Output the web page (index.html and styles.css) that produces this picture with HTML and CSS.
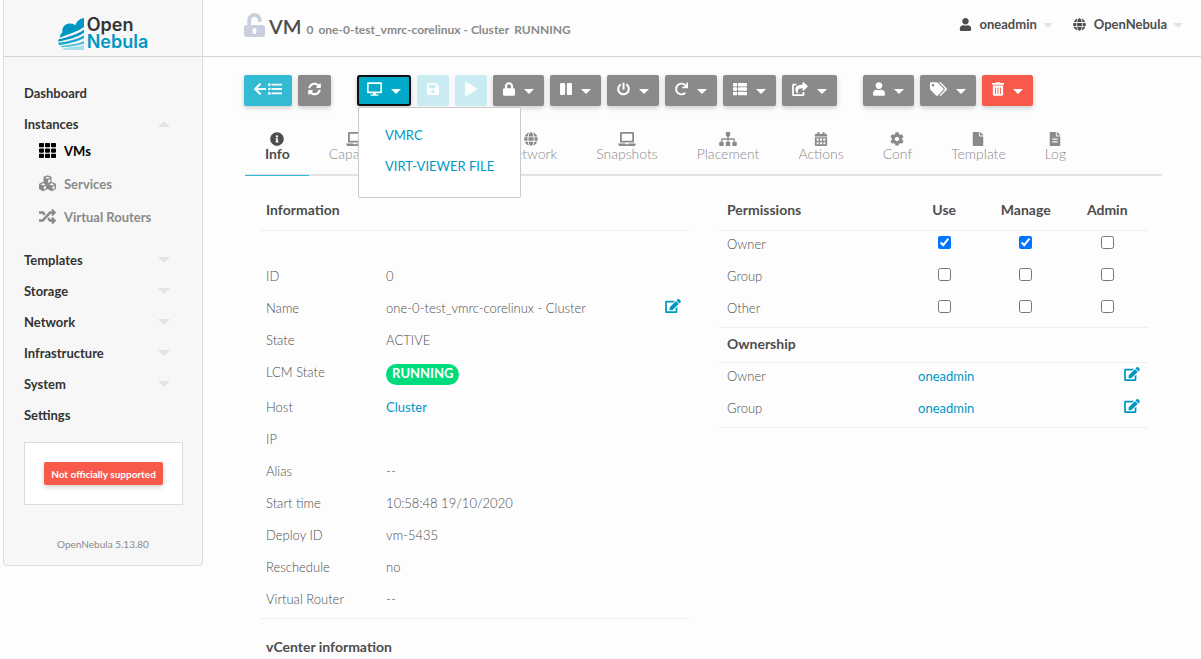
FILE: index.html
```html
<!DOCTYPE html>
<html lang="en">
<head>
<meta charset="utf-8">
<title>OpenNebula Sunstone</title>
<link rel="stylesheet" href="styles.css">
</head>
<body>
<svg class="sprite" aria-hidden="true">
  <symbol id="user" viewBox="0 0 448 512"><path d="M224 256c70.7 0 128-57.3 128-128S294.7 0 224 0 96 57.3 96 128s57.3 128 128 128zm89.6 32h-16.7c-22.2 10.2-46.9 16-72.9 16s-50.6-5.8-72.9-16h-16.7C60.2 288 0 348.2 0 422.4V464c0 26.5 21.5 48 48 48h352c26.5 0 48-21.5 48-48v-41.6c0-74.2-60.2-134.4-134.4-134.4z"/></symbol>
  <symbol id="unlock" viewBox="0 0 448 512"><path d="M400 256H152V152.900c0-39.600 31.700-72.500 71.300-72.900 40-.4 72.700 32.100 72.700 72v16c0 13.300 10.700 24 24 24h32c13.300 0 24-10.700 24-24v-16C376 68 307.500-.3 223.500 0 139.500.3 72 69.500 72 153.500V256H48c-26.500 0-48 21.500-48 48v160c0 26.500 21.500 48 48 48h352c26.500 0 48-21.500 48-48V304c0-26.500-21.500-48-48-48zM264 408c0 22.100-17.900 40-40 40s-40-17.900-40-40v-48c0-22.100 17.900-40 40-40s40 17.900 40 40v48z"/></symbol>
  <symbol id="lock" viewBox="0 0 448 512"><path d="M400 224h-24v-72C376 68.200 307.800 0 224 0S72 68.200 72 152v72H48c-26.500 0-48 21.500-48 48v192c0 26.500 21.500 48 48 48h352c26.500 0 48-21.500 48-48V272c0-26.500-21.500-48-48-48zm-104 0H152v-72c0-39.700 32.300-72 72-72s72 32.300 72 72v72z"/></symbol>
  <symbol id="play" viewBox="0 0 448 512"><path d="M424.400 214.700L72.400 6.600C43.800-10.300 0 6.100 0 47.900V464c0 37.500 40.700 60.100 72.400 41.300l352-208c31.400-18.500 31.500-64.100 0-82.600z"/></symbol>
  <symbol id="pause" viewBox="0 0 448 512"><path d="M144 479H48c-26.500 0-48-21.500-48-48V79c0-26.500 21.500-48 48-48h96c26.500 0 48 21.500 48 48v352c0 26.500-21.500 48-48 48zm304-48V79c0-26.500-21.500-48-48-48h-96c-26.500 0-48 21.500-48 48v352c0 26.500 21.500 48 48 48h96c26.500 0 48-21.500 48-48z"/></symbol>
  <symbol id="power" viewBox="0 0 512 512"><path d="M400 54.100c63 45 104 118.600 104 201.900 0 136.800-110.800 247.700-247.500 248C120 504.300 8.200 393 8 256.400 7.900 173.100 48.900 99.300 111.800 54.200c11.700-8.300 28-4.800 35 7.700L162.600 90c5.900 10.500 3.100 23.800-6.600 31-41.500 30.800-68 79.600-68 134.900-.1 92.300 74.500 168.100 168 168.100 91.600 0 168.600-74.200 168-169.100-.3-51.800-24.700-101.800-68.100-134-9.700-7.200-12.400-20.500-6.500-30.900l15.800-28.100c7-12.400 23.200-16.100 34.800-7.800zM296 264V24c0-13.300-10.700-24-24-24h-32c-13.300 0-24 10.700-24 24v240c0 13.300 10.700 24 24 24h32c13.300 0 24-10.700 24-24z"/></symbol>
  <symbol id="redo" viewBox="0 0 512 512"><path d="M500.330 0h-47.410a12 12 0 0 0-12 12.570l4 82.760A247.420 247.420 0 0 0 256 8C119.340 8 7.900 119.530 8 256.190 8.100 393.070 119.100 504 256 504a247.100 247.100 0 0 0 166.180-63.910 12 12 0 0 0 .48-17.430l-34-34a12 12 0 0 0-16.380-.55A176 176 0 1 1 402.100 157.800l-101.530-4.870a12 12 0 0 0-12.570 12v47.410a12 12 0 0 0 12 12h200.330a12 12 0 0 0 12-12V12a12 12 0 0 0-12-12z"/></symbol>
  <symbol id="sync" viewBox="0 0 512 512"><path d="M370.720 133.280C339.458 104.008 298.888 87.962 255.848 88c-77.458.068-144.328 53.178-162.791 126.850-1.344 5.363-6.122 9.150-11.651 9.150H24.103c-7.498 0-13.194-6.807-11.807-14.176C33.933 94.924 134.813 8 256 8c66.448 0 126.791 26.136 171.315 68.685L463.030 40.970C478.149 25.851 504 36.559 504 57.941V192c0 13.255-10.745 24-24 24H345.941c-21.382 0-32.090-25.851-16.971-40.971l41.750-41.749zM32 296h134.059c21.382 0 32.090 25.851 16.971 40.971l-41.750 41.750c31.262 29.273 71.835 45.319 114.876 45.280 77.418-.07 144.315-53.144 162.787-126.849 1.344-5.363 6.122-9.150 11.651-9.150h57.304c7.498 0 13.194 6.807 11.807 14.176C478.067 417.076 377.187 504 256 504c-66.448 0-126.791-26.136-171.315-68.685L48.970 471.030C33.851 486.149 8 475.441 8 454.059V320c0-13.255 10.745-24 24-24z"/></symbol>
  <symbol id="save" viewBox="0 0 448 512"><path d="M433.941 129.941l-83.882-83.882A48 48 0 0 0 316.118 32H48C21.490 32 0 53.490 0 80v352c0 26.510 21.490 48 48 48h352c26.510 0 48-21.490 48-48V163.882a48 48 0 0 0-14.059-33.941zM224 416c-35.346 0-64-28.654-64-64 0-35.346 28.654-64 64-64s64 28.654 64 64c0 35.346-28.654 64-64 64zm96-304.520V212c0 6.627-5.373 12-12 12H76c-6.627 0-12-5.373-12-12V108c0-6.627 5.373-12 12-12h228.520c3.183 0 6.235 1.264 8.485 3.515l3.480 3.480A11.996 11.996 0 0 1 320 111.480z"/></symbol>
  <symbol id="tags" viewBox="0 0 640 512"><path d="M497.941 225.941L286.059 14.059A48 48 0 0 0 252.118 0H48C21.490 0 0 21.490 0 48v204.118a48 48 0 0 0 14.059 33.941l211.882 211.882c18.744 18.745 49.136 18.746 67.882 0l204.118-204.118c18.745-18.745 18.745-49.137 0-67.882zM112 160c-26.510 0-48-21.490-48-48s21.490-48 48-48 48 21.490 48 48-21.490 48-48 48zm513.941 133.823L421.823 497.941c-18.745 18.745-49.137 18.745-67.882 0l-.36-.36L527.640 323.522c16.999-16.999 26.360-39.600 26.360-63.640s-9.362-46.641-26.360-63.640L331.397 0h48.721a48 48 0 0 1 33.941 14.059l211.882 211.882c18.745 18.745 18.745 49.137 0 67.882z"/></symbol>
  <symbol id="trash" viewBox="0 0 448 512"><path d="M32 464a48 48 0 0 0 48 48h288a48 48 0 0 0 48-48V128H32zm272-256a16 16 0 0 1 32 0v224a16 16 0 0 1-32 0zm-96 0a16 16 0 0 1 32 0v224a16 16 0 0 1-32 0zm-96 0a16 16 0 0 1 32 0v224a16 16 0 0 1-32 0zM432 32H312l-9.400-18.700A24 24 0 0 0 281.100 0H166.800a23.720 23.720 0 0 0-21.400 13.300L136 32H16A16 16 0 0 0 0 48v32a16 16 0 0 0 16 16h416a16 16 0 0 0 16-16V48a16 16 0 0 0-16-16z"/></symbol>
  <symbol id="info" viewBox="0 0 512 512"><path d="M256 8C119.043 8 8 119.083 8 256c0 136.997 111.043 248 248 248s248-111.003 248-248C504 119.083 392.957 8 256 8zm0 110c23.196 0 42 18.804 42 42s-18.804 42-42 42-42-18.804-42-42 18.804-42 42-42zm56 254c0 6.627-5.373 12-12 12h-88c-6.627 0-12-5.373-12-12v-24c0-6.627 5.373-12 12-12h12v-64h-12c-6.627 0-12-5.373-12-12v-24c0-6.627 5.373-12 12-12h64c6.627 0 12 5.373 12 12v100h12c6.627 0 12 5.373 12 12v24z"/></symbol>
  <symbol id="laptop" viewBox="0 0 640 512"><path d="M624 416H381.540c-.74 19.810-14.710 32-32.740 32H288c-18.690 0-33.020-17.470-32.770-32H16c-8.800 0-16 7.200-16 16v16c0 35.200 28.800 64 64 64h512c35.200 0 64-28.800 64-64v-16c0-8.800-7.200-16-16-16zM576 48c0-26.400-21.600-48-48-48H112C85.600 0 64 21.600 64 48v336h512V48zm-64 272H128V64h384v256z"/></symbol>
  <symbol id="file" viewBox="0 0 384 512"><path d="M224 136V0H24C10.700 0 0 10.700 0 24v464c0 13.300 10.700 24 24 24h336c13.300 0 24-10.700 24-24V160H248c-13.200 0-24-10.800-24-24zm160-14.100v6.100H256V0h6.100c6.400 0 12.500 2.500 17 7l97.900 98c4.500 4.500 7 10.600 7 16.900z"/></symbol>
  <symbol id="filetext" viewBox="0 0 384 512"><path fill-rule="evenodd" d="M224 136V0H24C10.700 0 0 10.700 0 24v464c0 13.300 10.700 24 24 24h336c13.300 0 24-10.700 24-24V160H248c-13.200 0-24-10.800-24-24zm160-14.100v6.100H256V0h6.100c6.400 0 12.500 2.500 17 7l97.900 98c4.500 4.500 7 10.600 7 16.900zM96 236h192v44H96zM96 340h192v44H96z"/></symbol>
  <symbol id="cog" viewBox="0 0 512 512"><path d="M487.400 315.700l-42.600-24.600c4.300-23.200 4.300-47 0-70.200l42.600-24.600c4.900-2.800 7.100-8.600 5.500-14-11.100-35.600-30-67.800-54.700-94.600-3.800-4.100-10-5.100-14.800-2.300L380.800 110c-17.900-15.400-38.500-27.300-60.800-35.100V25.800c0-5.600-3.900-10.500-9.400-11.700-36.700-8.200-74.300-7.800-109.200 0-5.500 1.200-9.400 6.100-9.400 11.700V75c-22.200 7.900-42.800 19.800-60.800 35.100L88.700 85.500c-4.900-2.800-11-1.900-14.800 2.300-24.700 26.700-43.600 58.900-54.700 94.600-1.700 5.400.6 11.200 5.500 14L67.300 221c-4.300 23.200-4.300 47 0 70.200l-42.600 24.600c-4.900 2.800-7.100 8.600-5.500 14 11.100 35.600 30 67.800 54.700 94.600 3.800 4.100 10 5.100 14.800 2.300l42.600-24.600c17.900 15.400 38.500 27.300 60.800 35.100v49.200c0 5.600 3.900 10.500 9.400 11.700 36.700 8.200 74.300 7.800 109.200 0 5.500-1.200 9.400-6.100 9.400-11.700v-49.200c22.200-7.900 42.800-19.800 60.800-35.100l42.600 24.600c4.900 2.800 11 1.900 14.800-2.300 24.700-26.700 43.600-58.900 54.700-94.600 1.500-5.500-.7-11.300-5.600-14.100zM256 336c-44.100 0-80-35.900-80-80s35.900-80 80-80 80 35.900 80 80-35.900 80-80 80z"/></symbol>
  <symbol id="edit" viewBox="0 0 576 512"><path d="M402.600 83.200l90.200 90.200c3.800 3.800 3.800 10 0 13.800L274.400 405.600l-92.800 10.300c-12.400 1.400-22.900-9.100-21.500-21.500l10.300-92.800L388.800 83.200c3.800-3.800 10-3.800 13.800 0zm162-22.900l-48.800-48.800c-15.200-15.200-39.900-15.200-55.200 0l-35.400 35.400c-3.800 3.800-3.800 10 0 13.800l90.200 90.200c3.800 3.800 10 3.800 13.800 0l35.400-35.400c15.200-15.300 15.200-40 0-55.200zM384 346.200V448H64V128h229.800c3.200 0 6.200-1.300 8.500-3.500l40-40c7.600-7.600 2.200-20.500-8.500-20.500H48C21.500 64 0 85.500 0 112v352c0 26.500 21.500 48 48 48h352c26.500 0 48-21.500 48-48V306.200c0-10.700-12.900-16-20.500-8.500l-40 40c-2.200 2.300-3.500 5.300-3.500 8.500z"/></symbol>
  <symbol id="arrow" viewBox="0 0 448 512"><path d="M257.500 445.100l-22.200 22.200c-9.400 9.400-24.600 9.400-33.900 0L7 273c-9.400-9.400-9.400-24.600 0-33.900L201.400 44.700c9.400-9.400 24.600-9.400 33.900 0l22.200 22.200c9.500 9.500 9.300 25-.4 34.300L136.600 216H424c13.300 0 24 10.700 24 24v32c0 13.300-10.700 24-24 24H136.600l120.500 114.800c9.800 9.300 10 24.800.4 34.300z"/></symbol>
  <symbol id="globe" viewBox="0 0 496 512"><path d="M336.500 160C322 70.700 287.800 8 248 8s-74 62.700-88.500 152h177zM152 256c0 22.200 1.200 43.500 3.300 64h185.300c2.100-20.500 3.300-41.800 3.300-64s-1.200-43.500-3.300-64H155.300c-2.100 20.500-3.300 41.800-3.300 64zm324.700-96c-28.600-67.900-86.500-120.400-158-141.600 24.400 33.800 41.200 84.700 50 141.600h108zM177.200 18.400C105.800 39.600 47.800 92.100 19.300 160h108c8.700-56.900 25.500-107.800 49.900-141.600zM487.400 192H372.700c2.100 21 3.300 42.500 3.300 64s-1.200 43-3.300 64h114.600c5.500-20.500 8.600-41.800 8.600-64s-3.100-43.500-8.500-64zM120 256c0-21.500 1.200-43 3.300-64H8.600C3.200 212.500 0 233.800 0 256s3.200 43.500 8.600 64h114.600c-2-21-3.200-42.500-3.200-64zm39.500 96c14.500 89.300 48.700 152 88.500 152s74-62.700 88.500-152h-177zm159.300 141.600c71.400-21.200 129.400-73.700 158-141.600h-108c-8.800 56.900-25.600 107.800-50 141.600zM19.300 352c28.600 67.900 86.500 120.400 158 141.600-24.400-33.800-41.200-84.700-50-141.600h-108z"/></symbol>
  <symbol id="random" viewBox="0 0 512 512"><path d="M504.971 359.029c9.373 9.373 9.373 24.569 0 33.941l-80 79.984c-15.010 15.010-40.971 4.490-40.971-16.971V416h-58.785a12.004 12.004 0 0 1-8.773-3.812l-70.556-75.596 53.333-57.143L352 336h32v-39.981c0-21.438 25.943-31.998 40.971-16.971l80 79.981zM12 176h84l52.781 56.551 53.333-57.143-70.556-75.596A11.999 11.999 0 0 0 122.785 96H12c-6.627 0-12 5.373-12 12v56c0 6.627 5.373 12 12 12zm372 0v39.984c0 21.460 25.961 31.980 40.971 16.971l80-79.984c9.373-9.373 9.373-24.569 0-33.941l-80-79.981C409.943 24.021 384 34.582 384 56.019V96h-58.785a12.004 12.004 0 0 0-8.773 3.812L96 336H12c-6.627 0-12 5.373-12 12v56c0 6.627 5.373 12 12 12h110.785c3.326 0 6.503-1.381 8.773-3.812L352 176h32z"/></symbol>
  <symbol id="grid" viewBox="0 0 512 512"><path d="M24 32h102a24 24 0 0 1 24 24v80a24 24 0 0 1-24 24H24a24 24 0 0 1-24-24V56a24 24 0 0 1 24-24zm181 0h102a24 24 0 0 1 24 24v80a24 24 0 0 1-24 24H205a24 24 0 0 1-24-24V56a24 24 0 0 1 24-24zm181 0h102a24 24 0 0 1 24 24v80a24 24 0 0 1-24 24H386a24 24 0 0 1-24-24V56a24 24 0 0 1 24-24zM24 192h102a24 24 0 0 1 24 24v80a24 24 0 0 1-24 24H24a24 24 0 0 1-24-24v-80a24 24 0 0 1 24-24zm181 0h102a24 24 0 0 1 24 24v80a24 24 0 0 1-24 24H205a24 24 0 0 1-24-24v-80a24 24 0 0 1 24-24zm181 0h102a24 24 0 0 1 24 24v80a24 24 0 0 1-24 24H386a24 24 0 0 1-24-24v-80a24 24 0 0 1 24-24zM24 352h102a24 24 0 0 1 24 24v80a24 24 0 0 1-24 24H24a24 24 0 0 1-24-24v-80a24 24 0 0 1 24-24zm181 0h102a24 24 0 0 1 24 24v80a24 24 0 0 1-24 24H205a24 24 0 0 1-24-24v-80a24 24 0 0 1 24-24zm181 0h102a24 24 0 0 1 24 24v80a24 24 0 0 1-24 24H386a24 24 0 0 1-24-24v-80a24 24 0 0 1 24-24z"/></symbol>
  <symbol id="thlist" viewBox="0 0 512 512"><rect y="32" width="150" height="128" rx="24"/><rect y="192" width="150" height="128" rx="24"/><rect y="352" width="150" height="128" rx="24"/><rect x="181" y="32" width="331" height="128" rx="24"/><rect x="181" y="192" width="331" height="128" rx="24"/><rect x="181" y="352" width="331" height="128" rx="24"/></symbol>
  <symbol id="list" viewBox="0 0 512 512"><circle cx="48" cy="96" r="48"/><circle cx="48" cy="256" r="48"/><circle cx="48" cy="416" r="48"/><rect x="128" y="60" width="384" height="72" rx="16"/><rect x="128" y="220" width="384" height="72" rx="16"/><rect x="128" y="380" width="384" height="72" rx="16"/></symbol>
  <symbol id="desktop" viewBox="0 0 576 512"><path fill-rule="evenodd" d="M528 0H48C21.500 0 0 21.500 0 48v320c0 26.500 21.500 48 48 48h192l-16 48h-72c-13.300 0-24 10.700-24 24s10.700 24 24 24h272c13.300 0 24-10.700 24-24s-10.700-24-24-24h-72l-16-48h192c26.500 0 48-21.500 48-48V48c0-26.500-21.500-48-48-48zM512 352H64V64h448z"/></symbol>
  <symbol id="share" viewBox="0 0 576 512"><path d="M568.500 177.400L424.500 313.400C409.300 327.800 384 317.100 384 296v-72c-144.600 1-205.600 35.100-164.800 171.400 4.500 15.100-13.700 26.700-26.300 17.500C152.600 383.500 116 327.500 116 271c0-143.900 117-174 268-175V24c0-21.200 25.300-31.800 40.500-17.400l144 136c10 9.500 10 25.400 0 34.800zM384 379.100V448H64V128h50a12 12 0 0 0 8.600-3.700c15.300-15.800 33.300-28.400 51.800-38.100C185.500 80.400 181.400 64 169 64H48C21.500 64 0 85.500 0 112v352c0 26.500 21.500 48 48 48h352c26.500 0 48-21.500 48-48v-88.800c0-8.200-8-14-15.700-11.200a64 64 0 0 1-34.900 1.400c-7.200-2.100-13.400 4.700-13.400 13.700z"/></symbol>
  <symbol id="sitemap" viewBox="0 0 640 512"><rect x="240" width="160" height="160" rx="32"/><rect y="352" width="160" height="160" rx="32"/><rect x="240" y="352" width="160" height="160" rx="32"/><rect x="480" y="352" width="160" height="160" rx="32"/><path d="M296 150h48v82h190a38 38 0 0 1 38 38v84h-48v-74H344v74h-48v-74H116v74H68v-84a38 38 0 0 1 38-38h190z"/></symbol>
  <symbol id="calendar" viewBox="0 0 448 512"><path fill-rule="evenodd" d="M48 64h48V12a12 12 0 0 1 12-12h40a12 12 0 0 1 12 12v52h128V12a12 12 0 0 1 12-12h40a12 12 0 0 1 12 12v52h48c26 0 48 22 48 48v48H0v-48c0-26 22-48 48-48zM0 192h448v272c0 26-22 48-48 48H48c-26 0-48-22-48-48zM64 240v76h76v-76zM186 240v76h76v-76zM308 240v76h76v-76zM64 376v76h76v-76zM186 376v76h76v-76zM308 376v76h76v-76z"/></symbol>
  <symbol id="cubes" viewBox="0 0 512 512"><path fill-rule="evenodd" d="M256 10l120 46v150l112 46 24 36v130l-126 68-130-62-130 62L0 418V288l24-36 112-46V56zM256 50l-82 32 82 32 82-32zM274 152v84l66-28v-84zM126 250l-80 32 80 34 80-34zM144 356v84l68-34v-80zM386 250l-80 32 80 34 80-34zM404 356v84l68-34v-80z"/></symbol>
  <symbol id="down" viewBox="0 0 12 6"><path d="M0 0h12L6 6z"/></symbol>
  <symbol id="up" viewBox="0 0 12 6"><path d="M0 6h12L6 0z"/></symbol>
</svg>

<aside class="sidebar">
  <a class="logo" href="#">
    <svg class="logo-mark" viewBox="0 0 78 96" aria-hidden="true">
      <path fill="#0098c3" d="M78 0v27C60 40 35 48 5 59c1-7 4-13 8-16-2-18 12-30 27-26 5 0 9 2 12 5C56 9 66 2 78 0z"/>
      <path fill="#0098c3" d="M2 64c30-8 58-16 76-29v9C55 60 30 64 0 71z"/>
      <path fill="#1aa8cc" d="M0 75c30-5 58-10 78-23v9C55 73 32 76 4 82z"/>
      <path fill="#4dbfd9" d="M6 84c28-3 52-6 72-15v8c-20 6-40 8-66 11z"/>
      <path fill="#a6deeb" d="M14 91c22-3 44-5 64-9v14H24c-4 0-8-2-10-5z"/>
    </svg>
    <span class="logo-text"><span>Open</span><span class="logo-blue">Nebula</span></span>
  </a>
  <nav class="menu">
    <a class="menu-item" href="#">Dashboard</a>
    <div class="menu-group">
      <a class="menu-item" href="#">Instances<svg class="tri"><use href="#up"/></svg></a>
      <a class="sub-item current" href="#"><svg class="sub-icon"><use href="#grid"/></svg>VMs</a>
      <a class="sub-item" href="#"><svg class="sub-icon"><use href="#cubes"/></svg>Services</a>
      <a class="sub-item" href="#"><svg class="sub-icon"><use href="#random"/></svg>Virtual Routers</a>
    </div>
    <a class="menu-item" href="#">Templates<svg class="tri"><use href="#down"/></svg></a>
    <a class="menu-item" href="#">Storage<svg class="tri"><use href="#down"/></svg></a>
    <a class="menu-item" href="#">Network<svg class="tri"><use href="#down"/></svg></a>
    <a class="menu-item" href="#">Infrastructure<svg class="tri"><use href="#down"/></svg></a>
    <a class="menu-item" href="#">System<svg class="tri"><use href="#down"/></svg></a>
    <a class="menu-item" href="#">Settings</a>
  </nav>
  <div class="support"><button class="support-btn" type="button">Not officially supported</button></div>
  <p class="version">OpenNebula 5.13.80</p>
</aside>

<div class="page">
  <header class="topbar">
    <svg class="title-lock"><use href="#unlock"/></svg>
    <h1 class="title">VM</h1>
    <p class="subtitle"><span>0</span><span>one-0-test_vmrc-corelinux - Cluster</span><span>RUNNING</span></p>
    <div class="account">
      <button class="top-btn" type="button"><svg class="top-icon"><use href="#user"/></svg>oneadmin<svg class="top-tri"><use href="#down"/></svg></button>
      <button class="top-btn" type="button"><svg class="top-icon"><use href="#globe"/></svg>OpenNebula<svg class="top-tri"><use href="#down"/></svg></button>
    </div>
  </header>

  <main class="content">
    <div class="toolbar">
      <div class="btn-group">
        <button class="btn teal back" type="button" aria-label="Back to list"><svg class="w12"><use href="#arrow"/></svg><svg class="w14"><use href="#list"/></svg></button>
        <button class="btn" type="button" aria-label="Refresh"><svg class="w13"><use href="#sync"/></svg></button>
      </div>
      <div class="btn-group">
        <div class="drop">
          <button class="btn open" type="button" aria-label="Remote connection"><svg class="w15"><use href="#desktop"/></svg><svg class="caret"><use href="#down"/></svg></button>
          <div class="drop-menu"><a href="#">VMRC</a><a href="#">VIRT-VIEWER FILE</a></div>
        </div>
        <button class="btn teal faded" type="button" aria-label="Save"><svg class="w12"><use href="#save"/></svg></button>
        <button class="btn teal faded" type="button" aria-label="Start"><svg class="w12"><use href="#play"/></svg></button>
        <button class="btn" type="button" aria-label="Lock"><svg class="w12"><use href="#lock"/></svg><svg class="caret"><use href="#down"/></svg></button>
        <button class="btn" type="button" aria-label="Suspend"><svg class="w12"><use href="#pause"/></svg><svg class="caret"><use href="#down"/></svg></button>
        <button class="btn" type="button" aria-label="Power off"><svg class="w13"><use href="#power"/></svg><svg class="caret"><use href="#down"/></svg></button>
        <button class="btn" type="button" aria-label="Reboot"><svg class="w13"><use href="#redo"/></svg><svg class="caret"><use href="#down"/></svg></button>
        <button class="btn" type="button" aria-label="Migrate"><svg class="w14"><use href="#thlist"/></svg><svg class="caret"><use href="#down"/></svg></button>
        <button class="btn" type="button" aria-label="Deploy"><svg class="w16"><use href="#share"/></svg><svg class="caret"><use href="#down"/></svg></button>
      </div>
      <div class="btn-group">
        <button class="btn" type="button" aria-label="Ownership"><svg class="w12"><use href="#user"/></svg><svg class="caret"><use href="#down"/></svg></button>
        <button class="btn" type="button" aria-label="Labels"><svg class="w17"><use href="#tags"/></svg><svg class="caret"><use href="#down"/></svg></button>
        <button class="btn red" type="button" aria-label="Terminate"><svg class="w12"><use href="#trash"/></svg><svg class="caret"><use href="#down"/></svg></button>
      </div>
    </div>

    <nav class="tabs">
      <a class="tab active" href="#"><svg><use href="#info"/></svg>Info</a>
      <a class="tab" href="#"><svg><use href="#laptop"/></svg>Capacity</a>
      <a class="tab" href="#"><svg><use href="#list"/></svg>Storage</a>
      <a class="tab" href="#"><svg><use href="#globe"/></svg>Network</a>
      <a class="tab" href="#"><svg><use href="#laptop"/></svg>Snapshots</a>
      <a class="tab" href="#"><svg><use href="#sitemap"/></svg>Placement</a>
      <a class="tab" href="#"><svg><use href="#calendar"/></svg>Actions</a>
      <a class="tab" href="#"><svg><use href="#cog"/></svg>Conf</a>
      <a class="tab" href="#"><svg><use href="#file"/></svg>Template</a>
      <a class="tab" href="#"><svg><use href="#filetext"/></svg>Log</a>
    </nav>

    <div class="panels">
      <section>
        <table class="data info-table">
          <colgroup><col class="c-label"><col><col class="c-edit"></colgroup>
          <thead><tr><th colspan="3">Information</th></tr></thead>
          <tbody>
            <tr><td colspan="3">&nbsp;</td></tr>
            <tr><td>ID</td><td>0</td><td></td></tr>
            <tr><td>Name</td><td>one-0-test_vmrc-corelinux - Cluster</td><td class="edit-cell"><a href="#" aria-label="Edit name"><svg class="edit"><use href="#edit"/></svg></a></td></tr>
            <tr><td>State</td><td>ACTIVE</td><td></td></tr>
            <tr><td>LCM State</td><td><span class="badge">RUNNING</span></td><td></td></tr>
            <tr><td>Host</td><td><a href="#">Cluster</a></td><td></td></tr>
            <tr><td>IP</td><td></td><td></td></tr>
            <tr><td>Alias</td><td>--</td><td></td></tr>
            <tr><td>Start time</td><td>10:58:48 19/10/2020</td><td></td></tr>
            <tr><td>Deploy ID</td><td>vm-5435</td><td></td></tr>
            <tr><td>Reschedule</td><td>no</td><td></td></tr>
            <tr><td>Virtual Router</td><td>--</td><td></td></tr>
          </tbody>
        </table>
        <h2 class="next-heading">vCenter information</h2>
      </section>
      <section>
        <table class="data perm-table">
          <colgroup><col class="c-perm"><col><col><col></colgroup>
          <thead><tr><th>Permissions</th><th>Use</th><th>Manage</th><th>Admin</th></tr></thead>
          <tbody>
            <tr><td>Owner</td><td><input type="checkbox" checked aria-label="Owner use"></td><td><input type="checkbox" checked aria-label="Owner manage"></td><td><input type="checkbox" aria-label="Owner admin"></td></tr>
            <tr><td>Group</td><td><input type="checkbox" aria-label="Group use"></td><td><input type="checkbox" aria-label="Group manage"></td><td><input type="checkbox" aria-label="Group admin"></td></tr>
            <tr><td>Other</td><td><input type="checkbox" aria-label="Other use"></td><td><input type="checkbox" aria-label="Other manage"></td><td><input type="checkbox" aria-label="Other admin"></td></tr>
          </tbody>
        </table>
        <table class="data owner-table">
          <colgroup><col class="c-owner"><col><col class="c-edit"></colgroup>
          <thead><tr><th colspan="3">Ownership</th></tr></thead>
          <tbody>
            <tr><td>Owner</td><td><a href="#">oneadmin</a></td><td class="edit-cell"><a href="#" aria-label="Edit owner"><svg class="edit"><use href="#edit"/></svg></a></td></tr>
            <tr><td>Group</td><td><a href="#">oneadmin</a></td><td class="edit-cell"><a href="#" aria-label="Edit group"><svg class="edit"><use href="#edit"/></svg></a></td></tr>
          </tbody>
        </table>
      </section>
    </div>
  </main>
</div>
</body>
</html>
```
FILE: styles.css
```css
* { box-sizing: border-box; }

body {
  margin: 0;
  padding-left: 3px;
  display: flex;
  align-items: flex-start;
  background: #fdfdfd;
  color: #4d4d4d;
  font: 300 13px/18px Lato, "Open Sans", sans-serif;
}

a { color: #0098c3; text-decoration: none; }
button { font-family: inherit; cursor: pointer; }
svg { fill: currentColor; }
.sprite { display: none; }

/* Sidebar */
.sidebar {
  flex: 0 0 200px;
  min-width: 0;
  background: #f7f7f7;
  border: 1px solid #dcdcdc;
  border-top: 0;
  border-radius: 0 0 4px 4px;
}

.logo {
  display: flex;
  justify-content: center;
  align-items: flex-end;
  gap: 3px;
  height: 57px;
  padding-bottom: 6px;
  border-bottom: 1px solid #d4d4d4;
}

.logo-mark { width: 26px; height: 32px; }

.logo-text {
  display: flex;
  flex-direction: column;
  color: #333;
  font: 600 18px/17px Inter, sans-serif;
}

.logo-blue { color: #0098c3; }

.menu {
  display: flex;
  flex-direction: column;
  gap: 11px;
  padding: 26px 32px 0 20px;
}

.menu-item {
  display: flex;
  justify-content: space-between;
  align-items: center;
  color: #333;
  font-weight: 700;
  line-height: 20px;
}

.menu-group { margin-bottom: 6px; }
.tri { width: 12px; height: 6px; color: #e3e3e3; }

.sub-item {
  display: flex;
  align-items: center;
  gap: 8px;
  height: 33px;
  padding-left: 15px;
  color: #8a8a8a;
  font-weight: 700;
}

.sub-item.current { color: #000; }
.sub-icon { width: 17px; height: 17px; }

.support {
  display: flex;
  justify-content: center;
  margin: 17px 19px 0 20px;
  padding: 19px 0;
  background: #fff;
  border: 1px solid #dcdcdc;
}

.support-btn {
  height: 23px;
  padding: 0 7px;
  border: 0;
  border-radius: 2px;
  background: #f75a4a;
  box-shadow: 0 2px 5px #0003;
  color: #fff;
  font-size: 10px;
  font-weight: 700;
  white-space: nowrap;
}

.version {
  margin: 0;
  padding: 30px 0 12px;
  color: #8a8a8a;
  font-size: 10px;
  font-weight: 400;
  text-align: center;
}

/* Top bar */
.page { flex: 1; min-width: 0; }

.topbar {
  display: flex;
  align-items: center;
  height: 57px;
  padding: 0 18px 6px 41px;
  border-bottom: 1px solid #d4d4d4;
}

.title-lock { width: 21px; height: 24px; color: #cacfdd; }
.title { margin: 2px 5px 0 4px; font-size: 20px; font-weight: 600; line-height: 24px; }

.subtitle {
  display: flex;
  gap: 5px;
  margin: 10px 0 0;
  color: #8a8a8a;
  font-size: 12px;
  font-weight: 700;
}

.account { display: flex; gap: 20px; margin-left: auto; }

.top-btn {
  display: flex;
  align-items: center;
  padding: 0 0 2px;
  border: 0;
  background: none;
  color: #4d4d4d;
  font-size: 13px;
  font-weight: 700;
}

.top-icon { width: 13px; height: 13px; margin-right: 8px; }
.top-tri { width: 10px; height: 5px; margin: 3px 0 0 6px; color: #e3e3e3; }

/* Toolbar */
.content { padding: 18px 39px 0 41px; }
.toolbar { display: flex; gap: 26px; }
.btn-group { display: flex; gap: 6px; }

.btn {
  display: flex;
  align-items: center;
  gap: 9px;
  height: 31px;
  padding: 0 10px 3px;
  border: 0;
  border-radius: 2px;
  background: #8a8a8a;
  box-shadow: 0 2px 5px #0003;
  color: #fff;
}

.btn.teal { background: #33bbd3; }
.btn.back { gap: 2px; }
.btn.faded { opacity: .25; }
.btn.red { background: #f75a4a; }
.btn.open { background: #00aac8; border-radius: 3px; outline: 2px solid #101010; outline-offset: -2px; }

.btn svg { height: 14px; }
.w12 { width: 12px; }
.w13 { width: 13px; }
.w14 { width: 14px; }
.w15 { width: 15px; }
.w16 { width: 16px; }
.w17 { width: 17px; }
.btn .caret { width: 10px; height: 5px; margin-top: 4px; }

.drop { position: relative; }

.drop-menu {
  position: absolute;
  top: 32px;
  left: 1px;
  z-index: 1;
  display: flex;
  flex-direction: column;
  gap: 13px;
  padding: 18px 26px 22px;
  background: #fff;
  border: 1px solid #cacaca;
  border-radius: 2px;
  font-weight: 400;
  white-space: nowrap;
}

/* Tabs */
.tabs {
  display: flex;
  margin: 26px 0 0 1px;
  border-bottom: 2px solid #e3e3e3;
  font-size: 14px;
}

.tab {
  display: flex;
  flex-direction: column;
  align-items: center;
  margin-bottom: -2px;
  padding: 0 19px 13px 20px;
  border-bottom: 1px solid transparent;
  color: #8a8a8a;
  line-height: 16px;
}

.tab svg { width: 18px; height: 14px; }
.tab.active { border-color: #33bbd3; color: #4d4d4d; font-weight: 700; }

/* Panels */
.panels {
  display: grid;
  grid-template-columns: 1fr 1fr;
  gap: 30px;
  padding: 14px 14px 0 16px;
}

.data {
  width: 100%;
  table-layout: fixed;
  border-collapse: separate;
  border-spacing: 0;
}

.data th {
  height: 41px;
  padding: 0 6px;
  border-bottom: 1px solid #efefef;
  font-size: 14px;
  font-weight: 700;
  text-align: left;
}

.data td { height: 32px; padding: 4px 6px 7px; vertical-align: top; }
.data tbody tr:last-child td { height: 33px; border-bottom: 1px solid #efefef; }
.data td a { font-weight: 400; }
.c-label { width: 28%; }
.c-edit { width: 40px; }
.c-perm { width: 43%; }
.c-owner { width: 45%; }

.data .edit-cell { padding-right: 8px; text-align: right; }
.edit { width: 16px; height: 14px; }

.badge {
  display: inline-block;
  margin: 1px 0 2px;
  padding: 0 6px 3px;
  border-radius: 12px;
  background: #00db7b;
  color: #fff;
  font-weight: 700;
}

.perm-table th, .perm-table td:first-child, .owner-table th, .owner-table td:first-child { padding-left: 8px; }
.perm-table th + th, .perm-table td + td { padding: 0; text-align: center; }
.perm-table td + td { padding-top: 2px; }
.perm-table input { margin: 3px; }
.owner-table th { height: 35px; padding-bottom: 3px; }

.next-heading { margin: 19px 6px 0; font-size: 14px; font-weight: 700; line-height: 18px; }
```
